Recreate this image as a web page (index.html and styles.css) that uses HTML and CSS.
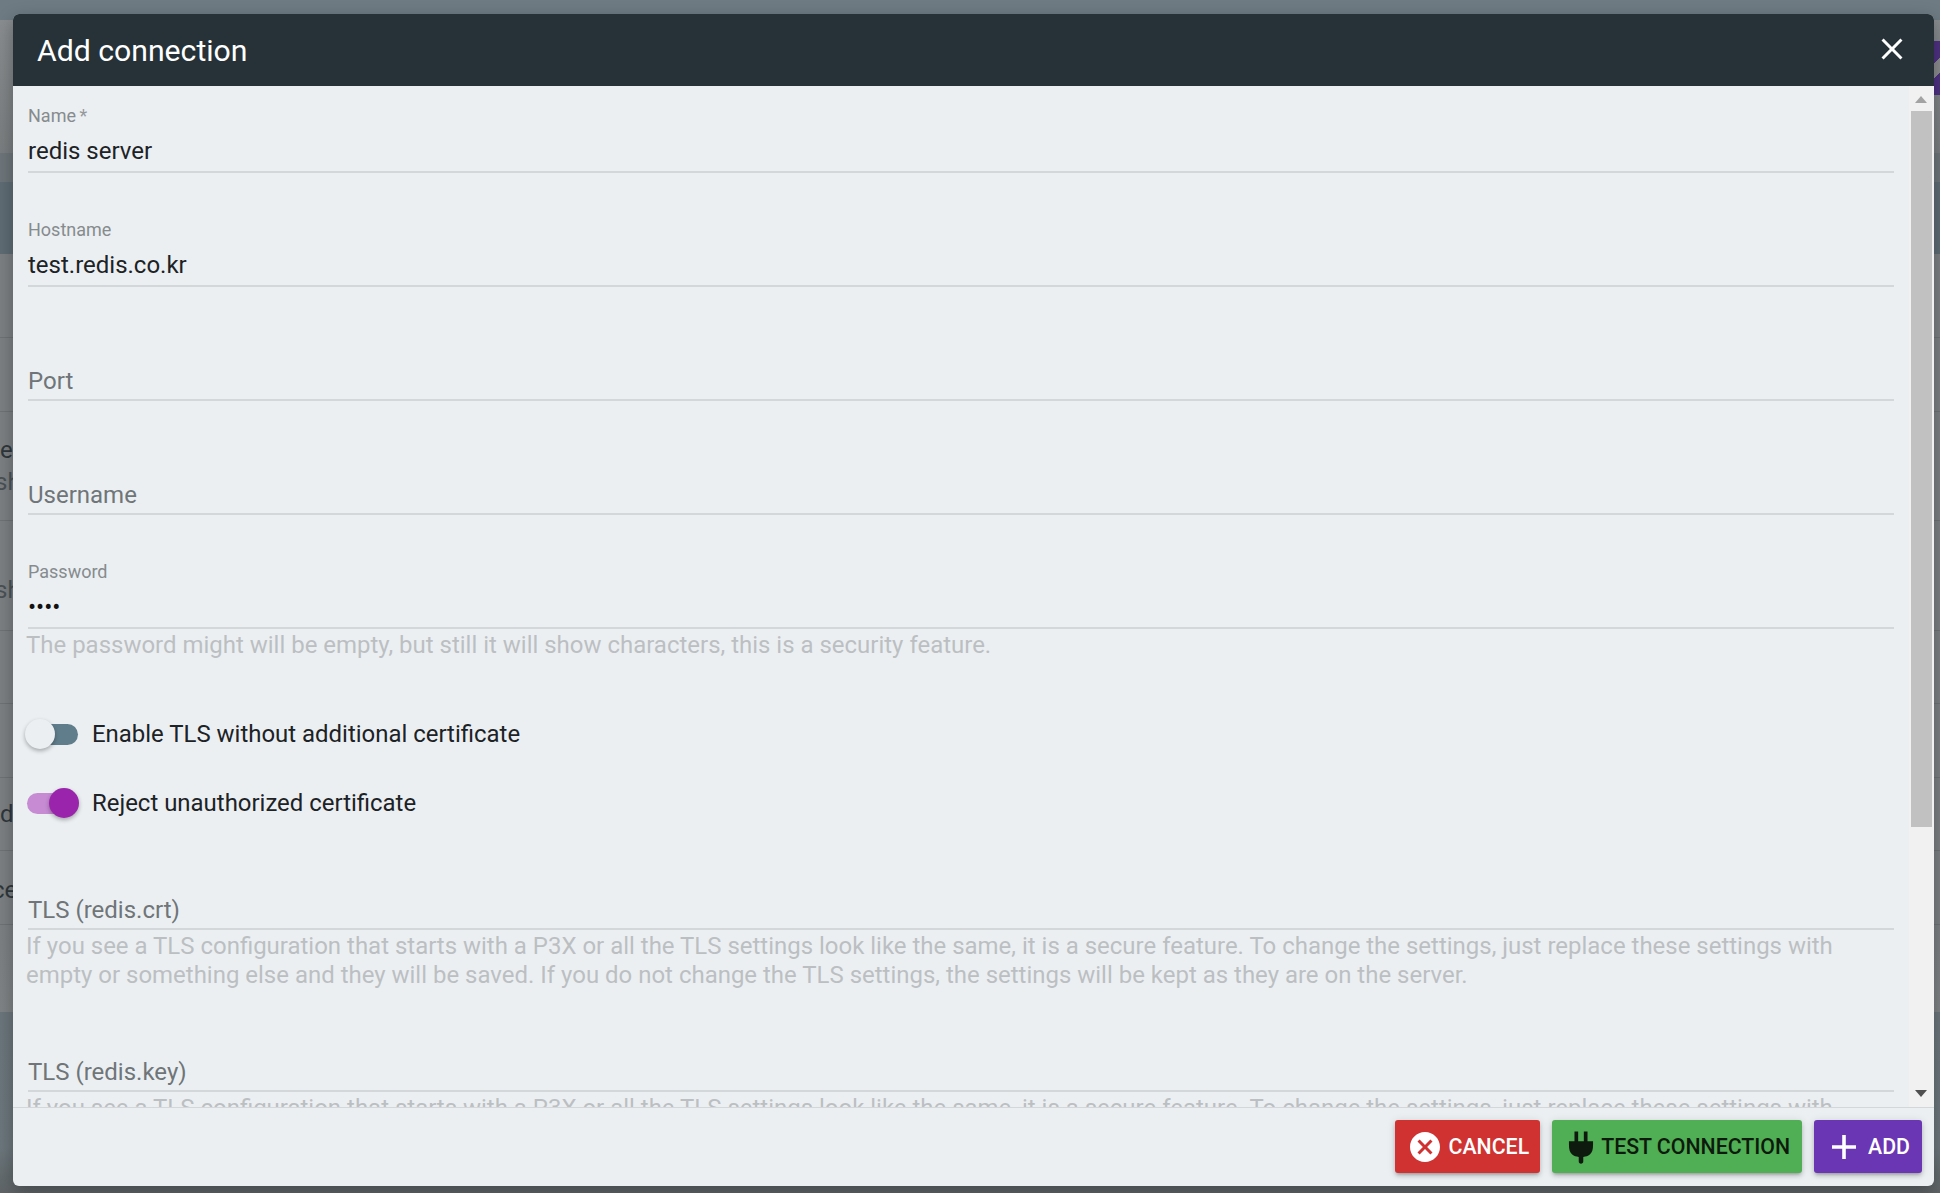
FILE: index.html
```html
<!DOCTYPE html>
<html lang="en">
<head>
<meta charset="utf-8">
<title>Add connection</title>
<link rel="stylesheet" href="styles.css">
</head>
<body>
<div class="page">
  <div class="band"></div>
  <div class="panel">
    <div class="row r1"><span class="tab"></span></div>
    <div class="row r2"></div>
    <div class="row r3"></div>
    <div class="row r4"></div>
    <div class="row r5"></div>
    <div class="row r6"><span class="peek p1">e</span><span class="peek p2">sh</span></div>
    <div class="row r7"><span class="peek p3">sh</span></div>
    <div class="row r8"></div>
    <div class="row r9"></div>
    <div class="row r10"><span class="peek p4">d</span></div>
    <div class="row r11"><span class="peek p5">ce</span></div>
    <div class="row r12"></div>
  </div>
  <div class="under"></div>

  <div class="modal">
    <header class="head">
      <h1 class="title">Add connection</h1>
      <svg class="close" viewBox="0 0 24 24"><path d="M19 6.41 17.59 5 12 10.59 6.41 5 5 6.41 10.59 12 5 17.59 6.41 19 12 13.41 17.59 19 19 17.59 13.41 12z"/></svg>
    </header>
    <div class="body">
      <div class="content">
        <div class="field first">
          <div class="lab">Name<span class="req"> *</span></div>
          <div class="val">redis server</div>
          <div class="line"></div>
        </div>
        <div class="field">
          <div class="lab">Hostname</div>
          <div class="val">test.redis.co.kr</div>
          <div class="line"></div>
        </div>
        <div class="field">
          <div class="val empty">Port</div>
          <div class="line"></div>
        </div>
        <div class="field">
          <div class="val empty">Username</div>
          <div class="line"></div>
        </div>
        <div class="field">
          <div class="lab">Password</div>
          <div class="val dots">••••</div>
          <div class="line"></div>
        </div>
        <div class="hint">The password might will be empty, but still it will show characters, this is a security feature.</div>
        <div class="toggle t1">
          <span class="switch off"><span class="track"></span><span class="thumb"></span></span>
          <span class="tlabel">Enable TLS without additional certificate</span>
        </div>
        <div class="toggle t2">
          <span class="switch on"><span class="track"></span><span class="thumb"></span></span>
          <span class="tlabel">Reject unauthorized certificate</span>
        </div>
        <div class="field tls">
          <div class="val empty">TLS (redis.crt)</div>
          <div class="line"></div>
        </div>
        <div class="hint">If you see a TLS configuration that starts with a P3X or all the TLS settings look like the same, it is a secure feature. To change the settings, just replace these settings with empty or something else and they will be saved. If you do not change the TLS settings, the settings will be kept as they are on the server.</div>
        <div class="field tls2">
          <div class="val empty">TLS (redis.key)</div>
          <div class="line"></div>
        </div>
        <div class="hint">If you see a TLS configuration that starts with a P3X or all the TLS settings look like the same, it is a secure feature. To change the settings, just replace these settings with empty or something else and they will be saved. If you do not change the TLS settings, the settings will be kept as they are on the server.</div>
      </div>
      <div class="scrollbar">
        <span class="arrow up"></span>
        <span class="thumbbar"></span>
        <span class="arrow down"></span>
      </div>
    </div>
    <footer class="foot">
      <button class="btn cancel"><svg class="ico ico-cancel" viewBox="0 0 24 24"><path d="M12 2C6.47 2 2 6.47 2 12s4.47 10 10 10 10-4.47 10-10S17.53 2 12 2zm5 13.59L15.59 17 12 13.41 8.41 17 7 15.59 10.59 12 7 8.41 8.41 7 12 10.59 15.59 7 17 8.41 13.41 12 17 15.59z"/></svg>Cancel</button>
      <button class="btn test"><svg class="ico ico-plug" viewBox="0 0 24 24"><path d="M7.400 1H10v7h4V1h2.600v7h3.900v2.200c0 3.600-.6 5.700-2.300 7.100-1.300 1-2.800 1.500-4.600 1.700v3.300c0 .9-.7 1.600-1.600 1.600s-1.600-.7-1.600-1.600V19c-1.800-.2-3.300-.7-4.600-1.700-1.700-1.400-2.300-3.500-2.300-7.100V8h3.900z"/></svg>Test connection</button>
      <button class="btn add"><svg class="ico ico-add" viewBox="0 0 24 24"><path d="M20 13.200h-6.800V20h-2.400v-6.800H4v-2.400h6.800V4h2.400v6.800H20z"/></svg>Add</button>
    </footer>
  </div>
</div>
</body>
</html>
```

FILE: styles.css
```css
* { box-sizing: border-box; }
html, body { margin: 0; padding: 0; }
body { font-family: Roboto, "Liberation Sans", sans-serif; }

.page {
  position: relative;
  width: 1940px;
  height: 1193px;
  overflow: hidden;
  display: flex;
  flex-direction: column;
  background: #6d787e;
}
.band { height: 20px; flex: none; background: #6e7b83; }
.panel { flex: none; display: flex; flex-direction: column; }
.under { flex: 1; background: linear-gradient(#6b767c, #6c777d 75%, #5f6567 100%); }

.row { position: relative; flex: none; border-bottom: 1px solid #6f7375; background: #7c8083; }
.r1 { height: 133px; background: linear-gradient(#898d8f, #7a7e80); border-bottom: 0; }
.r2 { height: 29px; background: #6e767b; border-bottom: 0; }
.r3 { height: 72px; background: #5f6c74; border-bottom: 0; }
.r4 { height: 84px; }
.r5 { height: 74px; }
.r6 { height: 109px; }
.r7 { height: 110px; }
.r8 { height: 73px; }
.r9 { height: 74px; }
.r10 { height: 73px; }
.r11 { height: 74px; }
.r12 { height: 87px; background: linear-gradient(#7c8083, #808486); border-bottom: 0; }

.tab {
  position: absolute;
  left: 1934px;
  top: 21px;
  width: 6px;
  height: 54px;
  background: linear-gradient(135deg, #4f3183 0 38%, #8a8c8e 38% 62%, #4f3183 62%);
}
.peek { position: absolute; left: 0; font-size: 24px; line-height: 24px; color: #2f373b; }
.p1 { top: 26px; }
.p2 { top: 58px; left: -5px; color: #4a5155; }
.p3 { top: 57px; left: -5px; color: #4a5155; }
.p4 { top: 24px; }
.p5 { top: 27px; left: -8px; }

.modal {
  position: absolute;
  left: 13px;
  top: 14px;
  width: 1921px;
  height: 1172px;
  border-radius: 6px;
  overflow: hidden;
  display: flex;
  flex-direction: column;
  background: #ebeff2;
  box-shadow: 0 6px 18px rgba(0, 0, 0, .3);
}
.head {
  flex: none;
  height: 72px;
  background: #263238;
  color: #fff;
  display: flex;
  align-items: center;
  justify-content: space-between;
  padding: 0 24px 0 24px;
}
.title { margin: 2px 0 0; font-size: 30.2px; font-weight: 400; line-height: 36px; }
.close { width: 36px; height: 36px; fill: #fff; margin-top: -2px; }

.body { flex: none; height: 1022px; display: flex; border-bottom: 1px solid #d3d7da; }
.content { flex: 1; min-width: 0; overflow: hidden; padding: 0 15px; }

.field { height: 88px; margin-top: 26px; display: flex; flex-direction: column; justify-content: flex-end; }
.field.first { height: 87px; margin-top: 0; }
.lab { height: 20px; margin-bottom: 5px; font-size: 18px; line-height: 20px; color: #868b8e; }
.req { margin-left: -1px; color: #95999c; }
.val { height: 40px; font-size: 24px; line-height: 40px; color: #1c2225; }
.val.empty { margin-bottom: -2px; color: #6f7578; }
.val.dots { color: #111; }
.line { height: 2px; flex: none; background: #d3d7da; position: relative; }

.hint { margin-left: -2px; padding-top: 1.5px; font-size: 23.97px; line-height: 29px; color: #bcbfc2; }

.toggle { display: flex; align-items: center; height: 40px; }
.t1 { margin-top: 54.5px; }
.t2 { margin-top: 29px; }
.switch { position: relative; display: block; width: 54px; height: 30px; margin-left: -3px; margin-right: 13px; flex: none; }
.track { position: absolute; left: 2px; right: 2px; top: 5px; height: 21px; border-radius: 11px; }
.thumb { position: absolute; top: 0; width: 30px; height: 30px; border-radius: 50%; box-shadow: 0 2px 4px rgba(0, 0, 0, .3); }
.off .track { right: 1px; background: #607d8b; }
.off .thumb { left: 0; background: #ebeff2; }
.on .track { background: #c68bd3; }
.on .thumb { right: 0; background: #9a25ac; }
.tlabel { font-size: 23.95px; color: #1c2225; }

.tls { margin-top: 19px; }
.tls2 { height: 60px; margin-top: 42.5px; }

.scrollbar {
  flex: none;
  width: 25px;
  background: #f1f1f1;
  display: flex;
  flex-direction: column;
  align-items: center;
  position: relative;
}
.thumbbar { position: absolute; left: 2px; right: 2px; top: 25px; height: 716px; background: #c1c1c1; }
.arrow { position: absolute; left: 6px; width: 0; height: 0; border-left: 6px solid transparent; border-right: 6px solid transparent; }
.up { top: 10px; border-bottom: 7px solid #a3a3a3; }
.down { bottom: 10px; border-top: 7px solid #505050; }

.foot {
  flex: 1;
  display: flex;
  justify-content: flex-end;
  align-items: flex-start;
  gap: 12px;
  padding: 12px 12px 0 0;
}
.btn {
  height: 53px;
  border: 0;
  border-radius: 3px;
  display: flex;
  align-items: center;
  font-family: inherit;
  font-size: 21.3px;
  font-weight: 500;
  text-transform: uppercase;
  padding: 0 12px;
  box-shadow: 0 3px 3px -2px rgba(0,0,0,.2), 0 3px 4px rgba(0,0,0,.14), 0 1px 8px rgba(0,0,0,.12);
}
.ico { display: block; flex: none; }
.cancel { background: #cf3230; color: #fff; padding-right: 11px; }
.ico-cancel { width: 36px; height: 36px; fill: #fff; margin-left: 0; margin-right: 6px; }
.test { background: #50ae54; color: #0e1a0d; }
.ico-plug { width: 34px; height: 34px; fill: #0e1a0d; margin-left: 0; margin-right: 3px; }
.add { background: #6a36b3; color: #fff; }
.ico-add { width: 36px; height: 36px; fill: #fff; margin-right: 6px; }
```
